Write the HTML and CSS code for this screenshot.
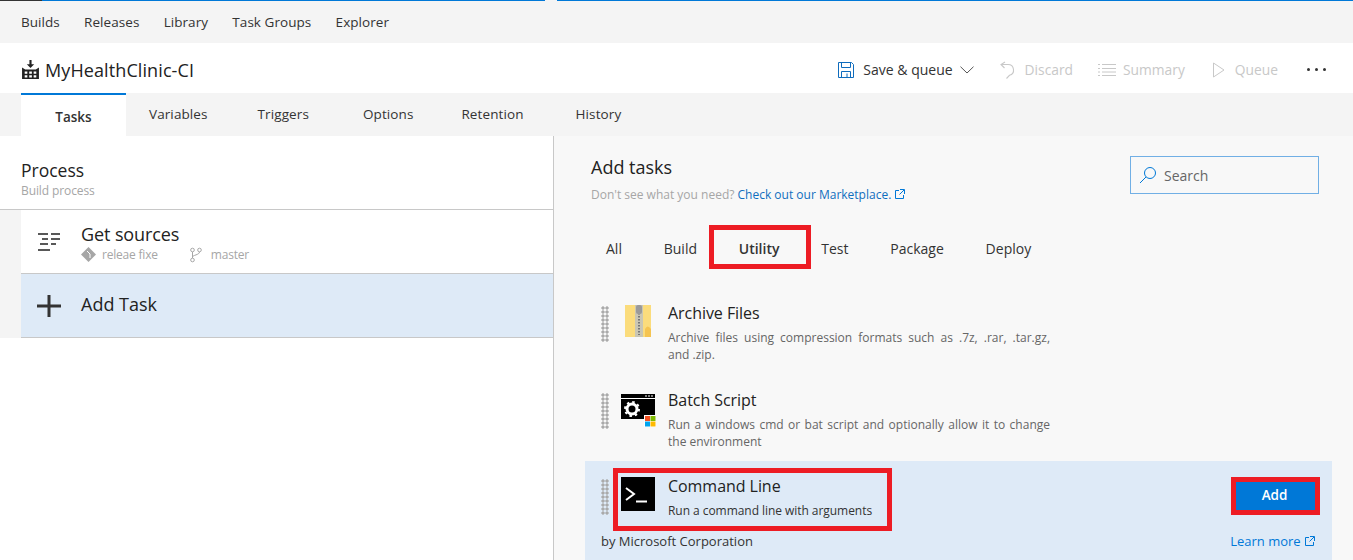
FILE: index.html
```html
<!DOCTYPE html>
<html lang="en">
<head>
<meta charset="UTF-8">
<title>MyHealthClinic-CI</title>
<link rel="stylesheet" href="styles.css">
</head>
<body>
<div class="progress"><span class="progress-dark"></span><span class="progress-blue"></span><span class="progress-gap"></span><span class="progress-rest"></span></div>

<nav class="topnav">
  <a>Builds</a><a>Releases</a><a>Library</a><a>Task Groups</a><a>Explorer</a>
</nav>

<header class="titlebar">
  <div class="title">
    <svg class="build-icon" width="19" height="19" viewBox="0 0 18 18">
      <path d="M8 0h2v4h2.500L9 7.500 5.500 4H8z" fill="#222"/>
      <path d="M1 7l3 2h10l3-2v11H1z" fill="#222"/>
      <path d="M3.500 11h2.500v2H3.500zM7.800 11h2.500v2H7.800zM12 11h2.500v2H12zM3.500 14.500h2.500v2H3.500zM7.800 14.500h2.500v2H7.800zM12 14.500h2.500v2H12z" fill="#fff"/>
    </svg>
    <span>MyHealthClinic-CI</span>
  </div>
  <div class="actions">
    <a class="action act-save">
      <svg width="16" height="16" viewBox="0 0 16 16" fill="none" stroke="#0f6cbd"><path d="M.5.500h13l2 2v13H.500z"/><path d="M3.500.500v5h9v-5M3.500 15.500v-6h9v6M9 11.500v4"/></svg>
      <span>Save &amp; queue</span>
      <svg class="chev" width="14" height="8" viewBox="0 0 14 8" fill="none" stroke="#555"><path d="M.5.700L7 7l6.500-6.300"/></svg>
    </a>
    <a class="action off act-discard">
      <svg width="15" height="18" viewBox="0 0 15 18" fill="none" stroke="#c8c8c8"><path d="M5 1L1 3.500 4.500 7M1 3.500h7a5.500 5.500 0 0 1 1.500 10.800L6.500 17.500" stroke-width="1.100"/></svg>
      <span>Discard</span>
    </a>
    <a class="action off act-summary">
      <svg width="18" height="12" viewBox="0 0 18 12" stroke="#c8c8c8"><path d="M4 .5h14M4 4.500h14M4 8h14M4 11.500h14M0 .5h2M0 4.500h2M0 8h2M0 11.500h2"/></svg>
      <span>Summary</span>
    </a>
    <a class="action off act-queue">
      <svg width="12" height="16" viewBox="0 0 12 16" fill="none" stroke="#c8c8c8"><path d="M.5 1v14L11 8z"/></svg>
      <span>Queue</span>
    </a>
    <span class="more"><i></i><i></i><i></i></span>
  </div>
</header>

<div class="tabs">
  <a class="tab active">Tasks</a>
  <a class="tab">Variables</a>
  <a class="tab">Triggers</a>
  <a class="tab">Options</a>
  <a class="tab">Retention</a>
  <a class="tab">History</a>
</div>

<main class="editor">
  <section class="process">
    <div class="process-head">
      <h2>Process</h2>
      <p>Build process</p>
    </div>
    <div class="process-rows">
      <div class="row">
        <svg class="row-icon" width="24" height="20" viewBox="0 0 24 20" stroke="#222" stroke-width="1.500"><path d="M1 2h10M14 2h9M5 7h6M14 7h9M3 12h8M14 12h5M1 18h12"/></svg>
        <div>
          <div class="row-title">Get sources</div>
          <div class="row-meta">
            <svg width="15" height="15" viewBox="0 0 15 15"><path d="M7.500 0L15 7.500 7.500 15 0 7.500z" fill="#a6a6a6"/><path d="M6 4l3 3v4M9 7l-1-1" stroke="#fff" fill="none"/></svg>
            <span class="repo">releae fixe</span>
            <svg width="12" height="16" viewBox="0 0 12 16" fill="none" stroke="#a6a6a6"><circle cx="2.500" cy="3" r="1.800"/><circle cx="9.500" cy="3" r="1.800"/><circle cx="2.500" cy="13" r="1.800"/><path d="M2.500 5v6M9.500 5c0 3-7 3-7 5"/></svg>
            <span class="branch">master</span>
          </div>
        </div>
      </div>
      <div class="row selected">
        <svg class="row-icon" width="24" height="24" viewBox="0 0 24 24" fill="#333"><path d="M10.500 1h3v9.500H24v3H13.500V23h-3v-9.500H0v-3h10.500z"/></svg>
        <div class="row-add">Add Task</div>
      </div>
    </div>
  </section>

  <section class="catalog">
    <div class="catalog-head">
      <div>
        <h2>Add tasks</h2>
        <p>Don't see what you need? <a>Check out our Marketplace.</a>
          <svg class="ext" width="10" height="10" viewBox="0 0 10 10" fill="none" stroke="#0078d7"><path d="M4 1.500H.5v8h8V6M5 .5h4.500V5M9 1L4.500 5.500"/></svg>
        </p>
      </div>
      <div class="search">
        <svg width="18" height="18" viewBox="0 0 18 18" fill="none" stroke="#0078d7"><circle cx="11" cy="7" r="5.500"/><path d="M7 11l-6 6"/></svg>
        <span>Search</span>
      </div>
    </div>

    <div class="filters">
      <a>All</a>
      <a>Build</a>
      <a class="f-utility">Utility</a>
      <a>Test</a>
      <a>Package</a>
      <a>Deploy</a>
    </div>

    <div class="task">
      <div class="grip"></div>
      <svg class="task-icon" width="36" height="36" viewBox="0 0 36 36">
        <rect x="5" y="1" width="26" height="32" fill="#fbdc7c"/>
        <rect x="15" y="1" width="8" height="32" fill="#c9c6b4"/>
        <path d="M19 3v28" stroke="#777" stroke-width="2" stroke-dasharray="1.500 1.500"/>
        <rect x="16" y="1" width="6" height="9" rx="2" fill="#9a9a9a"/>
        <path d="M25 33v-8q2.500-5 6 0v8z" fill="#f5c451"/>
      </svg>
      <div class="task-body">
        <div class="task-name">Archive Files</div>
        <p>Archive files using compression formats such as .7z, .rar, .tar.gz, and&nbsp;.zip.</p>
      </div>
    </div>

    <div class="task task-batch">
      <div class="grip"></div>
      <svg class="task-icon" width="36" height="36" viewBox="0 0 36 36">
        <rect x="1" y="3" width="34" height="25" fill="#000"/>
        <rect x="1" y="7" width="34" height="1" fill="#fff"/>
        <path d="M25 4.500h2v1h-2zM28 4.500h2v1h-2zM31 4.500h2v1h-2z" fill="#fff"/>
        <circle cx="12" cy="18" r="5" fill="none" stroke="#fff" stroke-width="3"/>
        <circle cx="12" cy="18" r="7" fill="none" stroke="#fff" stroke-width="2" stroke-dasharray="2.500 3"/>
        <rect x="24" y="24" width="12" height="12" fill="#fff"/>
        <rect x="25" y="25" width="5" height="5" fill="#f25022"/>
        <rect x="30.500" y="25" width="5" height="5" fill="#7fba00"/>
        <rect x="25" y="30.500" width="5" height="5" fill="#00a4ef"/>
        <rect x="30.500" y="30.500" width="5" height="5" fill="#ffb900"/>
      </svg>
      <div class="task-body">
        <div class="task-name">Batch Script</div>
        <p>Run a windows cmd or bat script and optionally allow it to change the environment</p>
      </div>
    </div>

    <div class="task-selected">
      <div class="task-top">
        <div class="grip"></div>
        <svg class="task-icon" width="36" height="36" viewBox="0 0 36 36">
          <rect x="1" y="0" width="34" height="34" fill="#000"/>
          <path d="M6 11l8 6-8 6" fill="none" stroke="#fff" stroke-width="2"/>
          <path d="M16 24.500h11" stroke="#fff" stroke-width="2"/>
        </svg>
        <div class="task-body">
          <div class="task-name">Command Line</div>
          <p class="dark">Run a command line with arguments</p>
        </div>
        <button class="add-btn">Add</button>
      </div>
      <div class="task-foot">
        <span>by Microsoft Corporation</span>
        <a>Learn more
          <svg class="ext" width="10" height="10" viewBox="0 0 10 10" fill="none" stroke="#0078d7"><path d="M4 1.500H.5v8h8V6M5 .5h4.500V5M9 1L4.500 5.500"/></svg>
        </a>
      </div>
    </div>
  </section>
</main>

<div class="mark mark-utility"></div>
<div class="mark mark-command"></div>
<div class="mark mark-add"></div>
</body>
</html>
```

FILE: styles.css
```css
html, body { margin: 0; height: 560px; overflow: hidden; }
body { font-family: "Open Sans", "Noto Sans", sans-serif; font-size: 14px; color: #333; background: #fff; position: relative; }
h2, p { margin: 0; font-weight: 400; }
a { color: inherit; }

.progress { display: flex; height: 1px; background: #f4f4f4; }
.progress-dark { width: 42px; background: #333; }
.progress-blue { width: 503px; background: #0078d7; }
.progress-gap { width: 12px; }
.progress-rest { flex: 1; background: #0078d7; }

.topnav { display: flex; gap: 24.300px; height: 42px; padding-left: 21px; align-items: center; background: #f4f4f4; font-size: 13.500px; letter-spacing: 0.050px; }

.titlebar { display: flex; justify-content: space-between; align-items: center; height: 50px; padding: 3px 27px 0 21px; box-sizing: border-box; }
.title { display: flex; align-items: center; gap: 5px; font-size: 18px; color: #222; letter-spacing: 0.100px; }
.actions { display: flex; align-items: center; font-size: 13.800px; }
.action { display: flex; align-items: center; color: #333; }
.action.off { color: #c8c8c8; }
.action svg { flex: none; }
.act-save { gap: 9px; margin-right: 26px; font-size: 14px; }
.act-save .chev { margin-left: -2px; }
.act-discard { gap: 10px; margin-right: 25px; }
.act-summary { gap: 7px; margin-right: 28px; }
.act-queue { gap: 10px; margin-right: 29px; }
.more { display: flex; gap: 5px; }
.more i { width: 3px; height: 3px; border-radius: 50%; background: #333; }

.tabs { display: flex; height: 43px; background: #f4f4f4; padding-left: 21px; font-size: 13.500px; letter-spacing: 0.100px; }
.tab { display: flex; align-items: center; margin-right: 50px; padding-bottom: 2px; }
.tab:nth-child(2) { margin-left: -27px; margin-right: 50px; }
.tab:nth-child(3) { margin-right: 54px; }
.tab:nth-child(4) { margin-right: 48px; }
.tab:nth-child(5) { margin-right: 52px; }
.tab.active { background: #fff; border-top: 2px solid #0078d7; width: 105px; padding: 3px 0 0; box-sizing: border-box; justify-content: center; font-weight: 600; letter-spacing: 0; }

.editor { display: flex; height: 424px; }

.process { width: 553px; border-right: 1px solid #c8c8c8; flex: none; }
.process-head { height: 74px; box-sizing: border-box; padding: 23px 21px 0; border-bottom: 1px solid #c8c8c8; }
.process-head h2 { font-size: 17.500px; line-height: 22px; color: #222; }
.process-head p { font-size: 12px; line-height: 19px; color: #a6a6a6; letter-spacing: -0.100px; }
.process-rows { padding-left: 21px; background: #f4f4f4; }
.row { display: flex; align-items: center; height: 64px; box-sizing: border-box; background: #fff; border-bottom: 1px solid #c8c8c8; padding-left: 16px; }
.row.selected { background: #deeaf7; }
.row-icon { flex: none; margin-right: 20px; }
.row-title { font-size: 18px; line-height: 22px; color: #222; letter-spacing: -0.100px; margin-top: 4px; }
.row-add { font-size: 18px; color: #222; margin-top: -4px; }
.row-meta { display: flex; align-items: center; gap: 6px; font-size: 12px; line-height: 19px; color: #a6a6a6; letter-spacing: -0.200px; }
.repo { margin-right: 26px; }
.branch { margin-left: 3px; }

.catalog { flex: 1; background: #f8f8f8; padding: 0 21px 0 31px; min-width: 0; }
.catalog-head { display: flex; justify-content: space-between; height: 90px; padding: 19px 13px 0 6px; box-sizing: border-box; }
.catalog-head h2 { font-size: 18px; line-height: 24px; color: #222; }
.catalog-head p { font-size: 12px; line-height: 31px; color: #a6a6a6; }
.catalog-head p a { color: #106ebe; }
.ext { margin-left: 1px; }
.search { display: flex; align-items: center; gap: 7px; width: 189px; height: 38px; margin-top: 1px; box-sizing: border-box; border: 1px solid #71afe5; padding-left: 8px; color: #666; font-size: 14px; }

.filters { display: flex; gap: 41.800px; height: 71px; padding: 13px 0 0 21px; box-sizing: border-box; font-size: 14px; color: #333; }
.filters a { line-height: 20px; }
.f-utility { font-weight: 600; }

.task { display: flex; padding-left: 16px; height: 87px; box-sizing: border-box; }
.task-batch { height: 77px; }
.grip { width: 8px; height: 36px; margin-top: 9px; flex: none; background-image: radial-gradient(circle, #aaa 1.500px, transparent 1.700px); background-size: 4px 4px; }
.task-icon { flex: none; margin: 7px 12px 0 11px; }
.task-body { width: 382px; padding-top: 5px; }
.task-name { font-size: 16px; line-height: 22px; color: #222; letter-spacing: -0.050px; }
.task-body p { font-size: 12px; line-height: 17px; color: #666; margin-top: 5px; text-align: justify; }
.task-body p.dark { color: #333; text-align: left; margin-top: 5px; white-space: nowrap; letter-spacing: -0.050px; }

.task-selected { background: #deeaf7; padding: 9px 0 0 16px; height: 99px; }
.task-top { display: flex; }
.task-foot { display: flex; justify-content: space-between; padding-right: 17px; margin-top: 13px; font-size: 13px; color: #333; }
.task-foot a { color: #0078d7; }
.add-btn { margin: 8px 17px 0 auto; width: 81px; height: 33px; border: 0; background: #0078d7; color: #fff; font: 600 13.500px "Open Sans", sans-serif; }

/* red call-outs drawn over the screenshot */
.mark { position: absolute; border: 5px solid #ed1c24; box-sizing: border-box; }
.mark-utility { left: 709px; top: 225px; width: 102px; height: 44px; }
.mark-command { left: 613px; top: 468px; width: 279px; height: 63px; }
.mark-add { left: 1231px; top: 477px; width: 89px; height: 38px; }
```
